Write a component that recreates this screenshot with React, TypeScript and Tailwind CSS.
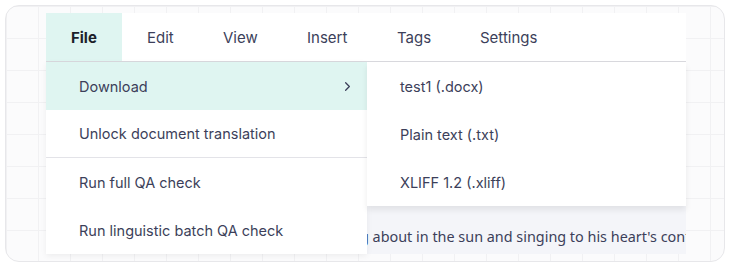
import React from "react";
import { ChevronRight } from "lucide-react";

const tabs = ["File", "Edit", "View", "Insert", "Tags", "Settings"];
const tabWidths = ["w-[76px]", "w-[76px]", "w-[84px]", "w-[90px]", "w-[83px]", "w-[100px]"];

export default function App() {
  return (
    <div className="w-[731px] h-[267px] bg-white p-[5px] font-['Inter',sans-serif]">
      <div className="w-[720px] h-[257px] rounded-[14px] border border-[#e7e7ea] bg-[#fbfbfc] bg-[linear-gradient(to_right,#f1f1f3_1px,transparent_1px),linear-gradient(to_bottom,#f1f1f3_1px,transparent_1px)] bg-[size:32px_32px] pl-[40px] pt-[7px] overflow-hidden">
        <div className="w-[640px] relative">
          {/* menubar */}
          <div className="h-[49px] bg-white border-b border-[#d9d9de] flex">
            {tabs.map((t, i) => (
              <div
                key={t}
                className={`${tabWidths[i]} h-full flex items-center pl-[25px] pt-[2px] text-[15px] ${
                  i === 0 ? "bg-[#dff5f1] font-bold text-[#1c1f2a]" : "text-[#3c3f5a]"
                }`}
              >
                {t}
              </div>
            ))}
          </div>
          {/* content */}
          <div className="h-[192px] bg-[#f4f5f9] relative text-[15px] text-[#3c3f5a] overflow-hidden">
            <div className="h-[55px]" />
            <div className="flex items-center h-[14px]">
              <div className="w-[2px] h-[12px] bg-[#111] ml-[-1px]" />
            </div>
            <div className="h-[96px]" />
            <div className="whitespace-nowrap w-[640px] pl-[314px] leading-[20px] font-['Noto_Sans',sans-serif] text-[14.4px]">
              g about in the sun and singing to his heart's content.
            </div>
          </div>
          {/* dropdown */}
          <div className="absolute left-0 top-[49px] w-[321px] bg-white text-[14.5px] text-[#3c3f5a] shadow-[0_2px_6px_rgba(0,0,0,0.06)]">
            <div className="h-[48px] bg-[#dff5f1] flex items-center justify-between pl-[33px] pr-[12px] pt-[1px]">
              <span>Download</span>
              <ChevronRight size={15} strokeWidth={2} className="text-[#3c3f5a]" />
            </div>
            <div className="h-[48px] flex items-center pl-[33px] pt-[1px] border-b border-[#e3e3e8]">
              Unlock document translation
            </div>
            <div className="h-[48px] flex items-center pl-[33px] pt-[1px]">Run full QA check</div>
            <div className="h-[48px] flex items-center pl-[33px] pt-[1px]">Run linguistic batch QA check</div>
          </div>
          {/* submenu */}
          <div className="absolute left-[321px] top-[49px] w-[319px] bg-white text-[14.5px] text-[#3c3f5a] shadow-[0_4px_6px_rgba(0,0,0,0.08)]">
            <div className="h-[48px] flex items-center pl-[33px] pt-[1px]">test1 (.docx)</div>
            <div className="h-[48px] flex items-center pl-[33px] pt-[1px]">Plain text (.txt)</div>
            <div className="h-[48px] flex items-center pl-[33px] pt-[1px]">XLIFF 1.2 (.xliff)</div>
          </div>
        </div>
      </div>
    </div>
  );
}
